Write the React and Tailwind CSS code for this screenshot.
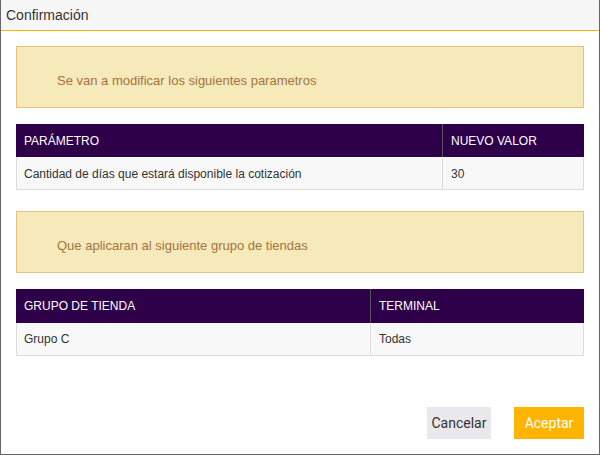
export default function App() {
  const font = { fontFamily: '"Liberation Sans", Arial, sans-serif' };
  return (
    <div className="w-[600px] h-[455px] bg-white border border-t-0 border-[#666] flex flex-col" style={font}>
      <div className="h-[31px] shrink-0 bg-[#f7f7f7] border-b border-[#ffb400] flex items-center pl-[5px] text-[14px] text-[#333]">
        Confirmación
      </div>
      <div className="flex flex-col px-[15px] pt-[15px]">
        <div className="h-[62px] bg-[#f6eaba] border border-[#e6c27f] flex items-center pt-[7px] pl-[40px] text-[13px] text-[#a5723e]">
          Se van a modificar los siguientes parametros
        </div>
        <div className="mt-[16px] text-[12px]">
          <div className="flex h-[33px] bg-[#2e0049] text-white">
            <div className="w-[427px] flex items-center pl-[8px] border-r border-[#555]">PARÁMETRO</div>
            <div className="flex-1 flex items-center pl-[8px]">NUEVO VALOR</div>
          </div>
          <div className="flex h-[33px] bg-[#f8f8f8] text-[#333] border border-t-0 border-[#ddd]">
            <div className="w-[426px] flex items-center pt-[1px] pl-[7px] border-r border-[#ddd]">Cantidad de días que estará disponible la cotización</div>
            <div className="flex-1 flex items-center pt-[1px] pl-[8px]">30</div>
          </div>
        </div>
        <div className="mt-[21px] h-[62px] bg-[#f6eaba] border border-[#e6c27f] flex items-center pt-[7px] pl-[40px] text-[13px] text-[#a5723e]">
          Que aplicaran al siguiente grupo de tiendas
        </div>
        <div className="mt-[16px] text-[12px]">
          <div className="flex h-[34px] bg-[#2e0049] text-white">
            <div className="w-[355px] flex items-center pl-[8px] border-r border-[#555]">GRUPO DE TIENDA</div>
            <div className="flex-1 flex items-center pl-[8px]">TERMINAL</div>
          </div>
          <div className="flex h-[33px] bg-[#f8f8f8] text-[#333] border border-t-0 border-[#ddd]">
            <div className="w-[354px] flex items-center pl-[7px] border-r border-[#ddd]">Grupo C</div>
            <div className="flex-1 flex items-center pl-[8px]">Todas</div>
          </div>
        </div>
        <div className="mt-[51px] flex justify-end gap-[23px]" style={{ fontFamily: 'Roboto, "Liberation Sans", sans-serif' }}>
          <button className="h-[32px] w-[64px] bg-[#e8e8ed] text-[#333] text-[14px] font-normal">Cancelar</button>
          <button className="h-[32px] w-[70px] bg-[#ffb400] text-white text-[14px] font-normal">Aceptar</button>
        </div>
      </div>
    </div>
  );
}
